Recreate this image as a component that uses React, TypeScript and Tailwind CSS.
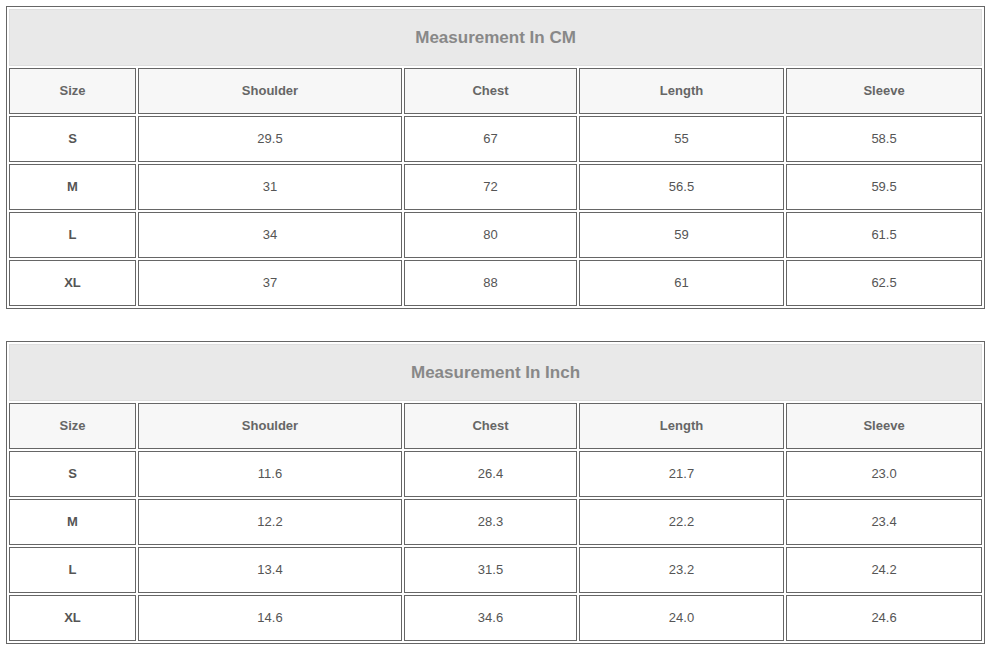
const columns = ['Size', 'Shoulder', 'Chest', 'Length', 'Sleeve'];
const widths = ['w-[127px]', 'w-[264px]', 'w-[173px]', 'w-[205px]', 'w-[196px]'];

const cmRows = [
  ['S', '29.5', '67', '55', '58.5'],
  ['M', '31', '72', '56.5', '59.5'],
  ['L', '34', '80', '59', '61.5'],
  ['XL', '37', '88', '61', '62.5'],
];

const inchRows = [
  ['S', '11.6', '26.4', '21.7', '23.0'],
  ['M', '12.2', '28.3', '22.2', '23.4'],
  ['L', '13.4', '31.5', '23.2', '24.2'],
  ['XL', '14.6', '34.6', '24.0', '24.6'],
];

function SizeTable({ title, rows }: { title: string; rows: string[][] }) {
  return (
    <table className="w-[979px] table-fixed border-separate border-spacing-[2px] border border-[#666] text-center">
      <colgroup>
        {widths.map((w, i) => (
          <col key={i} className={w} />
        ))}
      </colgroup>
      <thead>
        <tr>
          <th
            colSpan={5}
            className="h-[57px] p-0 border border-[#dedede] bg-[#e9e9e9] text-[17px] font-bold text-[#888]"
          >
            {title}
          </th>
        </tr>
        <tr>
          {columns.map((c) => (
            <th
              key={c}
              className="h-[46px] p-0 border border-[#666] bg-[#f7f7f7] text-[13px] font-bold text-[#666]"
            >
              {c}
            </th>
          ))}
        </tr>
      </thead>
      <tbody>
        {rows.map((row) => (
          <tr key={row[0]}>
            {row.map((v, i) => (
              <td
                key={i}
                className={
                  i === 0
                    ? 'h-[46px] p-0 border border-[#666] bg-white text-[13px] font-bold text-[#555]'
                    : 'h-[46px] p-0 border border-[#666] bg-white text-[13px] text-[#555]'
                }
              >
                {v}
              </td>
            ))}
          </tr>
        ))}
      </tbody>
    </table>
  );
}

export default function App() {
  return (
    <div
      className="w-[991px] h-[652px] bg-white pl-[6px] pt-[6px]"
      style={{ fontFamily: '"Liberation Sans", Arial, sans-serif' }}
    >
      <SizeTable title="Measurement In CM" rows={cmRows} />
      <div className="mt-[32px]">
        <SizeTable title="Measurement In Inch" rows={inchRows} />
      </div>
    </div>
  );
}
